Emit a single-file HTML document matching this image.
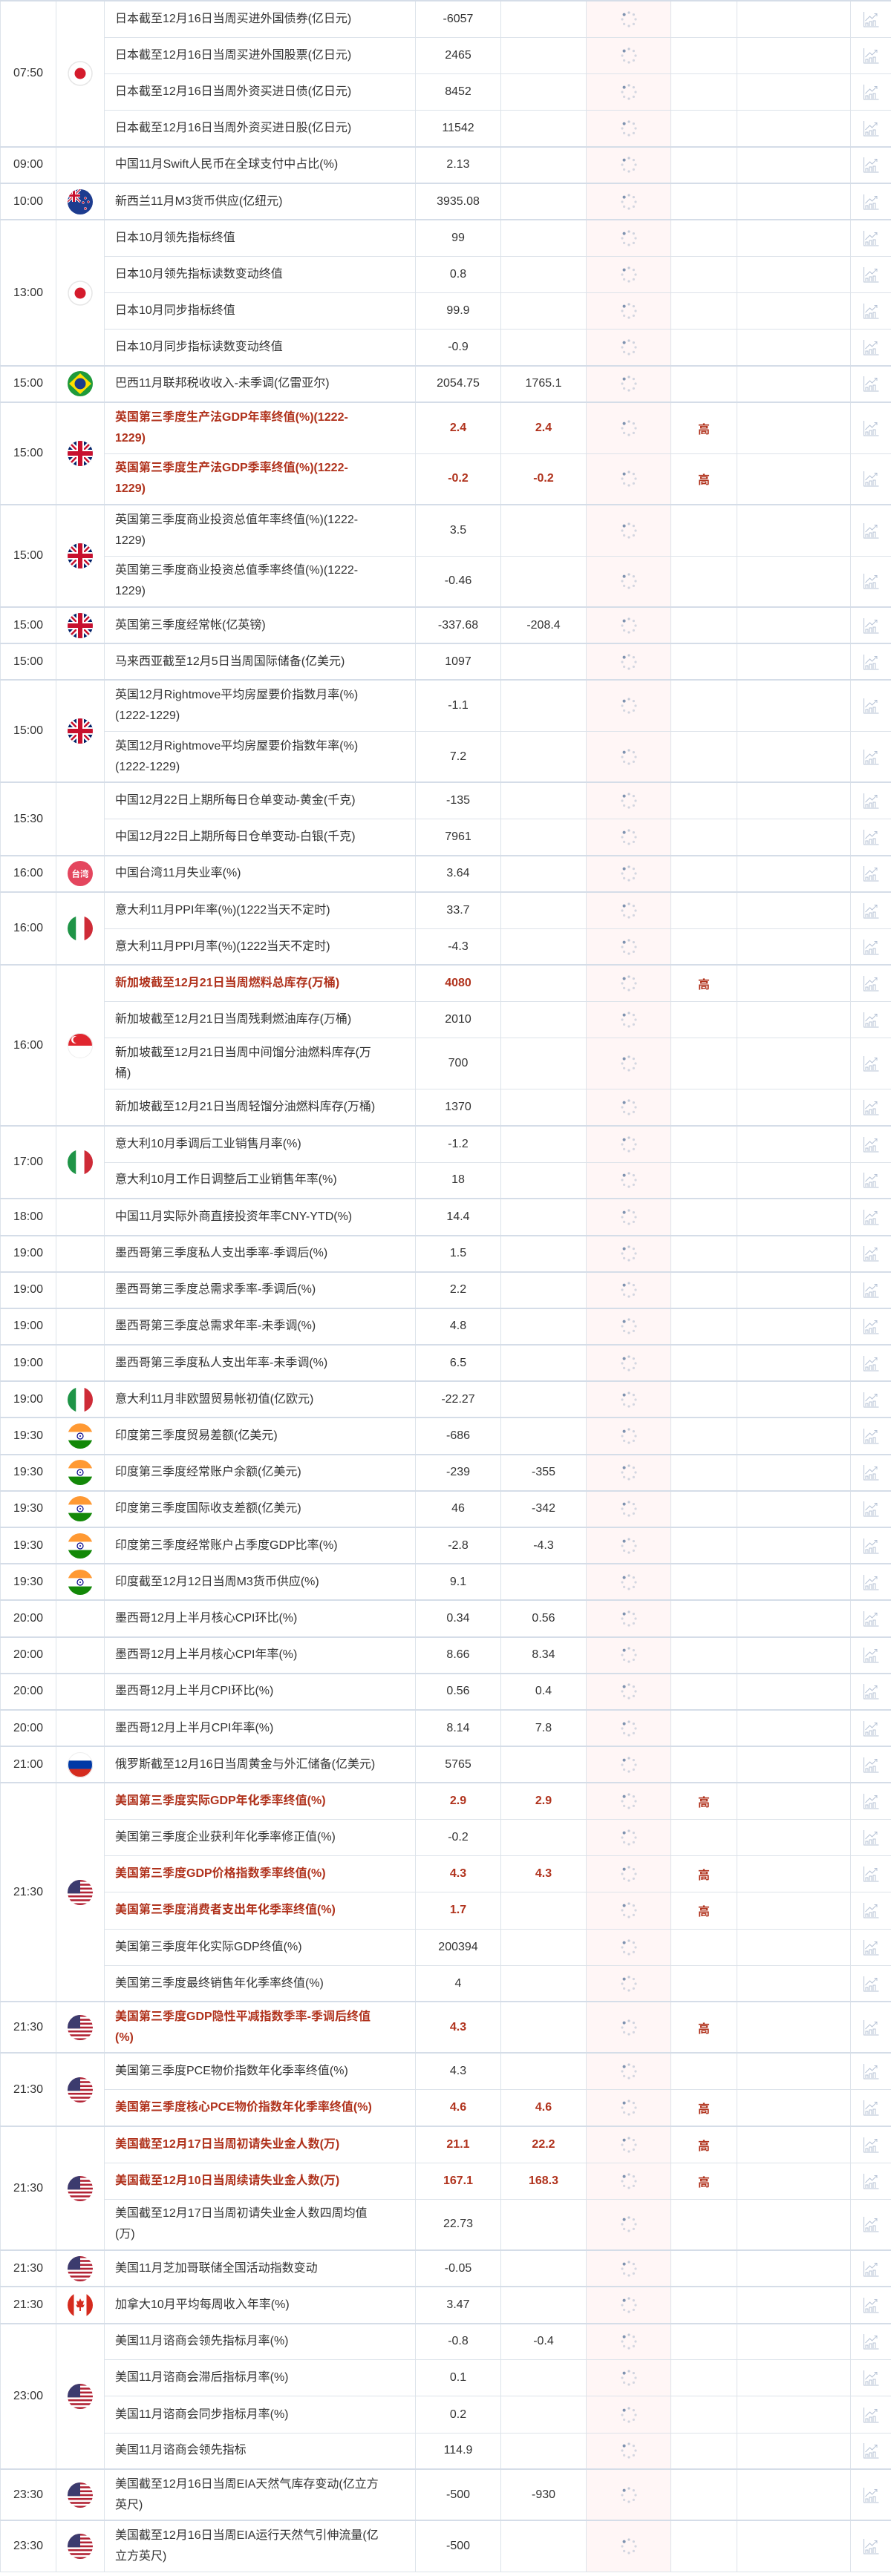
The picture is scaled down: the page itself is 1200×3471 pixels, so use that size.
<!DOCTYPE html>
<html><head><meta charset="utf-8">
<style>
html,body{margin:0;padding:0;background:#fff;}
body{width:1200px;height:3471px;overflow:hidden;font-family:"Liberation Sans","Noto Sans CJK SC",sans-serif;color:#333;font-size:16px;}
table{border-collapse:collapse;table-layout:fixed;width:1200px;border-top:2px solid #b9a896;}
td{border:1px solid #dde3ea;padding:0;text-align:center;vertical-align:middle;white-space:nowrap;overflow:hidden;}
tr.s{height:49.2px}
tr.d{height:69px}
tr.g>td{border-top:2px solid #d5dde8}
td.n{text-align:left;padding-left:14px;line-height:28px;}
td.p{background:#fff6f6}
td.f svg{display:block;margin:0 auto;width:34px;height:34px}
td.p svg{display:block;margin:0 auto;width:24px;height:24px}
td.c svg{display:block;margin:0 auto;width:24px;height:24px}
tr.r td.n,tr.r td.v,tr.r td.h{color:#b0321c;font-weight:bold}
td.h{color:#b0321c;font-weight:bold}
</style></head><body>
<svg width="0" height="0" style="position:absolute">
<defs>
<clipPath id="cc"><circle cx="17" cy="17" r="17"/></clipPath>
<symbol id="spin" viewBox="0 0 24 24">
<circle cx="12" cy="3" r="1.6" fill="#a9b8cc" opacity=".7"/>
<circle cx="18.4" cy="5.6" r="1.6" fill="#a9b8cc" opacity=".55"/>
<circle cx="21" cy="12" r="1.6" fill="#a9b8cc" opacity=".5"/>
<circle cx="18.4" cy="18.4" r="1.6" fill="#a9b8cc" opacity=".5"/>
<circle cx="12" cy="21" r="1.6" fill="#a9b8cc" opacity=".55"/>
<circle cx="5.6" cy="18.4" r="1.6" fill="#a9b8cc" opacity=".5"/>
<circle cx="3" cy="12" r="1.6" fill="#a9b8cc" opacity=".5"/>
<circle cx="5.6" cy="5.6" r="2" fill="#7f93b0"/>
</symbol>
<symbol id="ch" viewBox="0 0 24 24" fill="none" stroke="#b7c3d6" stroke-width="1">
<path d="M2.5 2v20h20"/>
<path d="M5 21v-4h3v4M10 21v-6h3v6M15 21v-7h3v7"/>
<path d="M4.5 14l6-6 3 3 6-6"/>
<path d="M16.5 4.5h3.5v3.5"/>
</symbol>
<symbol id="jp" viewBox="0 0 34 34"><circle cx="17" cy="17" r="16" fill="#fff" stroke="#e6e6e6" stroke-width="1.5"/><circle cx="17" cy="17" r="7.5" fill="#d41b2c"/></symbol>
<symbol id="uk" viewBox="0 0 34 34"><g clip-path="url(#cc)"><rect width="34" height="34" fill="#012169"/><path d="M0 0L34 34M34 0L0 34" stroke="#fff" stroke-width="7"/><path d="M0 0L34 34M34 0L0 34" stroke="#c8102e" stroke-width="2.5"/><path d="M17 0v34M0 17h34" stroke="#fff" stroke-width="10"/><path d="M17 0v34M0 17h34" stroke="#c8102e" stroke-width="6"/></g></symbol>
<symbol id="nz" viewBox="0 0 34 34"><g clip-path="url(#cc)"><rect width="34" height="34" fill="#1d3c8f"/><g transform="scale(.5)"><path d="M0 0L34 34M34 0L0 34" stroke="#fff" stroke-width="7"/><path d="M0 0L34 34M34 0L0 34" stroke="#c8102e" stroke-width="2.5"/><path d="M17 0v34M0 17h34" stroke="#fff" stroke-width="10"/><path d="M17 0v34M0 17h34" stroke="#c8102e" stroke-width="6"/></g><circle cx="24" cy="12" r="1.5" fill="#d0213a" stroke="#fff" stroke-width=".5"/><circle cx="28" cy="17" r="1.5" fill="#d0213a" stroke="#fff" stroke-width=".5"/><circle cx="21" cy="18" r="1.5" fill="#d0213a" stroke="#fff" stroke-width=".5"/><circle cx="24" cy="26" r="1.7" fill="#d0213a" stroke="#fff" stroke-width=".5"/></g></symbol>
<symbol id="br" viewBox="0 0 34 34"><g clip-path="url(#cc)"><rect width="34" height="34" fill="#1f9a3a"/><polygon points="17,3 32,17 17,31 2,17" fill="#fedf00"/><circle cx="17" cy="17" r="7.5" fill="#1b3c8c"/></g></symbol>
<symbol id="tw" viewBox="0 0 34 34"><circle cx="17" cy="17" r="17" fill="#e4465e"/><text x="17" y="21.5" font-size="11.5" font-weight="bold" fill="#fff" text-anchor="middle" font-family="Noto Sans CJK SC,sans-serif">台湾</text></symbol>
<symbol id="it" viewBox="0 0 34 34"><g clip-path="url(#cc)"><rect width="11.4" height="34" fill="#1f9447"/><rect x="11.3" width="11.4" height="34" fill="#fff"/><rect x="22.6" width="11.4" height="34" fill="#ce2b37"/></g></symbol>
<symbol id="sg" viewBox="0 0 34 34"><g clip-path="url(#cc)"><rect width="34" height="34" fill="#fff"/><rect width="34" height="17" fill="#e0262f"/><circle cx="10" cy="9" r="5" fill="#fff"/><circle cx="12" cy="9" r="4.5" fill="#e0262f"/></g><circle cx="17" cy="17" r="16.5" fill="none" stroke="#eee"/></symbol>
<symbol id="in" viewBox="0 0 34 34"><g clip-path="url(#cc)"><rect width="34" height="34" fill="#fff"/><rect width="34" height="11.4" fill="#ff9933"/><rect y="22.6" width="34" height="11.4" fill="#138808"/><circle cx="17" cy="17" r="4" fill="none" stroke="#000088" stroke-width="1.2"/><circle cx="17" cy="17" r="1" fill="#000088"/></g></symbol>
<symbol id="ru" viewBox="0 0 34 34"><g clip-path="url(#cc)"><rect width="34" height="34" fill="#fff"/><rect y="11.3" width="34" height="11.4" fill="#0039a6"/><rect y="22.6" width="34" height="11.4" fill="#d52b1e"/></g><circle cx="17" cy="17" r="16.5" fill="none" stroke="#eee"/></symbol>
<symbol id="ca" viewBox="0 0 34 34"><g clip-path="url(#cc)"><rect width="34" height="34" fill="#fff"/><rect width="8.5" height="34" fill="#d52b1e"/><rect x="25.5" width="8.5" height="34" fill="#d52b1e"/><polygon points="17,8 19,12 22,11 20.5,17 23,16 21,20 18,20 18,25 16,25 16,20 13,20 11,16 13.5,17 12,11 15,12" fill="#d52b1e"/></g></symbol>
<symbol id="us" viewBox="0 0 34 34"><g clip-path="url(#cc)"><rect width="34" height="34" fill="#fff"/><rect y="0" width="34" height="2.6" fill="#b22234"/><rect y="5.2" width="34" height="2.6" fill="#b22234"/><rect y="10.5" width="34" height="2.6" fill="#b22234"/><rect y="15.7" width="34" height="2.6" fill="#b22234"/><rect y="20.9" width="34" height="2.6" fill="#b22234"/><rect y="26.2" width="34" height="2.6" fill="#b22234"/><rect y="31.4" width="34" height="2.6" fill="#b22234"/><rect width="17" height="18.3" fill="#3c3b6e"/></g></symbol>
</defs></svg>
<table>
<colgroup><col style="width:75px"><col style="width:65px"><col style="width:419px"><col style="width:115px"><col style="width:115px"><col style="width:114px"><col style="width:89px"><col style="width:153px"><col style="width:55px"></colgroup>
<tbody>
<tr class="s g"><td rowspan="4">07:50</td><td class="f" rowspan="4"><svg><use href="#jp"/></svg></td><td class="n">日本截至12月16日当周买进外国债券(亿日元)</td><td class="v">-6057</td><td class="v"></td><td class="p"><svg><use href="#spin"/></svg></td><td class="h"></td><td></td><td class="c"><svg><use href="#ch"/></svg></td></tr>
<tr class="s"><td class="n">日本截至12月16日当周买进外国股票(亿日元)</td><td class="v">2465</td><td class="v"></td><td class="p"><svg><use href="#spin"/></svg></td><td class="h"></td><td></td><td class="c"><svg><use href="#ch"/></svg></td></tr>
<tr class="s"><td class="n">日本截至12月16日当周外资买进日债(亿日元)</td><td class="v">8452</td><td class="v"></td><td class="p"><svg><use href="#spin"/></svg></td><td class="h"></td><td></td><td class="c"><svg><use href="#ch"/></svg></td></tr>
<tr class="s"><td class="n">日本截至12月16日当周外资买进日股(亿日元)</td><td class="v">11542</td><td class="v"></td><td class="p"><svg><use href="#spin"/></svg></td><td class="h"></td><td></td><td class="c"><svg><use href="#ch"/></svg></td></tr>
<tr class="s g"><td>09:00</td><td class="f"></td><td class="n">中国11月Swift人民币在全球支付中占比(%)</td><td class="v">2.13</td><td class="v"></td><td class="p"><svg><use href="#spin"/></svg></td><td class="h"></td><td></td><td class="c"><svg><use href="#ch"/></svg></td></tr>
<tr class="s g"><td>10:00</td><td class="f"><svg><use href="#nz"/></svg></td><td class="n">新西兰11月M3货币供应(亿纽元)</td><td class="v">3935.08</td><td class="v"></td><td class="p"><svg><use href="#spin"/></svg></td><td class="h"></td><td></td><td class="c"><svg><use href="#ch"/></svg></td></tr>
<tr class="s g"><td rowspan="4">13:00</td><td class="f" rowspan="4"><svg><use href="#jp"/></svg></td><td class="n">日本10月领先指标终值</td><td class="v">99</td><td class="v"></td><td class="p"><svg><use href="#spin"/></svg></td><td class="h"></td><td></td><td class="c"><svg><use href="#ch"/></svg></td></tr>
<tr class="s"><td class="n">日本10月领先指标读数变动终值</td><td class="v">0.8</td><td class="v"></td><td class="p"><svg><use href="#spin"/></svg></td><td class="h"></td><td></td><td class="c"><svg><use href="#ch"/></svg></td></tr>
<tr class="s"><td class="n">日本10月同步指标终值</td><td class="v">99.9</td><td class="v"></td><td class="p"><svg><use href="#spin"/></svg></td><td class="h"></td><td></td><td class="c"><svg><use href="#ch"/></svg></td></tr>
<tr class="s"><td class="n">日本10月同步指标读数变动终值</td><td class="v">-0.9</td><td class="v"></td><td class="p"><svg><use href="#spin"/></svg></td><td class="h"></td><td></td><td class="c"><svg><use href="#ch"/></svg></td></tr>
<tr class="s g"><td>15:00</td><td class="f"><svg><use href="#br"/></svg></td><td class="n">巴西11月联邦税收收入-未季调(亿雷亚尔)</td><td class="v">2054.75</td><td class="v">1765.1</td><td class="p"><svg><use href="#spin"/></svg></td><td class="h"></td><td></td><td class="c"><svg><use href="#ch"/></svg></td></tr>
<tr class="d g r"><td rowspan="2">15:00</td><td class="f" rowspan="2"><svg><use href="#uk"/></svg></td><td class="n">英国第三季度生产法GDP年率终值(%)(1222-<br>1229)</td><td class="v">2.4</td><td class="v">2.4</td><td class="p"><svg><use href="#spin"/></svg></td><td class="h">高</td><td></td><td class="c"><svg><use href="#ch"/></svg></td></tr>
<tr class="d r"><td class="n">英国第三季度生产法GDP季率终值(%)(1222-<br>1229)</td><td class="v">-0.2</td><td class="v">-0.2</td><td class="p"><svg><use href="#spin"/></svg></td><td class="h">高</td><td></td><td class="c"><svg><use href="#ch"/></svg></td></tr>
<tr class="d g"><td rowspan="2">15:00</td><td class="f" rowspan="2"><svg><use href="#uk"/></svg></td><td class="n">英国第三季度商业投资总值年率终值(%)(1222-<br>1229)</td><td class="v">3.5</td><td class="v"></td><td class="p"><svg><use href="#spin"/></svg></td><td class="h"></td><td></td><td class="c"><svg><use href="#ch"/></svg></td></tr>
<tr class="d"><td class="n">英国第三季度商业投资总值季率终值(%)(1222-<br>1229)</td><td class="v">-0.46</td><td class="v"></td><td class="p"><svg><use href="#spin"/></svg></td><td class="h"></td><td></td><td class="c"><svg><use href="#ch"/></svg></td></tr>
<tr class="s g"><td>15:00</td><td class="f"><svg><use href="#uk"/></svg></td><td class="n">英国第三季度经常帐(亿英镑)</td><td class="v">-337.68</td><td class="v">-208.4</td><td class="p"><svg><use href="#spin"/></svg></td><td class="h"></td><td></td><td class="c"><svg><use href="#ch"/></svg></td></tr>
<tr class="s g"><td>15:00</td><td class="f"></td><td class="n">马来西亚截至12月5日当周国际储备(亿美元)</td><td class="v">1097</td><td class="v"></td><td class="p"><svg><use href="#spin"/></svg></td><td class="h"></td><td></td><td class="c"><svg><use href="#ch"/></svg></td></tr>
<tr class="d g"><td rowspan="2">15:00</td><td class="f" rowspan="2"><svg><use href="#uk"/></svg></td><td class="n">英国12月Rightmove平均房屋要价指数月率(%)<br>(1222-1229)</td><td class="v">-1.1</td><td class="v"></td><td class="p"><svg><use href="#spin"/></svg></td><td class="h"></td><td></td><td class="c"><svg><use href="#ch"/></svg></td></tr>
<tr class="d"><td class="n">英国12月Rightmove平均房屋要价指数年率(%)<br>(1222-1229)</td><td class="v">7.2</td><td class="v"></td><td class="p"><svg><use href="#spin"/></svg></td><td class="h"></td><td></td><td class="c"><svg><use href="#ch"/></svg></td></tr>
<tr class="s g"><td rowspan="2">15:30</td><td class="f" rowspan="2"></td><td class="n">中国12月22日上期所每日仓单变动-黄金(千克)</td><td class="v">-135</td><td class="v"></td><td class="p"><svg><use href="#spin"/></svg></td><td class="h"></td><td></td><td class="c"><svg><use href="#ch"/></svg></td></tr>
<tr class="s"><td class="n">中国12月22日上期所每日仓单变动-白银(千克)</td><td class="v">7961</td><td class="v"></td><td class="p"><svg><use href="#spin"/></svg></td><td class="h"></td><td></td><td class="c"><svg><use href="#ch"/></svg></td></tr>
<tr class="s g"><td>16:00</td><td class="f"><svg><use href="#tw"/></svg></td><td class="n">中国台湾11月失业率(%)</td><td class="v">3.64</td><td class="v"></td><td class="p"><svg><use href="#spin"/></svg></td><td class="h"></td><td></td><td class="c"><svg><use href="#ch"/></svg></td></tr>
<tr class="s g"><td rowspan="2">16:00</td><td class="f" rowspan="2"><svg><use href="#it"/></svg></td><td class="n">意大利11月PPI年率(%)(1222当天不定时)</td><td class="v">33.7</td><td class="v"></td><td class="p"><svg><use href="#spin"/></svg></td><td class="h"></td><td></td><td class="c"><svg><use href="#ch"/></svg></td></tr>
<tr class="s"><td class="n">意大利11月PPI月率(%)(1222当天不定时)</td><td class="v">-4.3</td><td class="v"></td><td class="p"><svg><use href="#spin"/></svg></td><td class="h"></td><td></td><td class="c"><svg><use href="#ch"/></svg></td></tr>
<tr class="s g r"><td rowspan="4">16:00</td><td class="f" rowspan="4"><svg><use href="#sg"/></svg></td><td class="n">新加坡截至12月21日当周燃料总库存(万桶)</td><td class="v">4080</td><td class="v"></td><td class="p"><svg><use href="#spin"/></svg></td><td class="h">高</td><td></td><td class="c"><svg><use href="#ch"/></svg></td></tr>
<tr class="s"><td class="n">新加坡截至12月21日当周残剩燃油库存(万桶)</td><td class="v">2010</td><td class="v"></td><td class="p"><svg><use href="#spin"/></svg></td><td class="h"></td><td></td><td class="c"><svg><use href="#ch"/></svg></td></tr>
<tr class="d"><td class="n">新加坡截至12月21日当周中间馏分油燃料库存(万<br>桶)</td><td class="v">700</td><td class="v"></td><td class="p"><svg><use href="#spin"/></svg></td><td class="h"></td><td></td><td class="c"><svg><use href="#ch"/></svg></td></tr>
<tr class="s"><td class="n">新加坡截至12月21日当周轻馏分油燃料库存(万桶)</td><td class="v">1370</td><td class="v"></td><td class="p"><svg><use href="#spin"/></svg></td><td class="h"></td><td></td><td class="c"><svg><use href="#ch"/></svg></td></tr>
<tr class="s g"><td rowspan="2">17:00</td><td class="f" rowspan="2"><svg><use href="#it"/></svg></td><td class="n">意大利10月季调后工业销售月率(%)</td><td class="v">-1.2</td><td class="v"></td><td class="p"><svg><use href="#spin"/></svg></td><td class="h"></td><td></td><td class="c"><svg><use href="#ch"/></svg></td></tr>
<tr class="s"><td class="n">意大利10月工作日调整后工业销售年率(%)</td><td class="v">18</td><td class="v"></td><td class="p"><svg><use href="#spin"/></svg></td><td class="h"></td><td></td><td class="c"><svg><use href="#ch"/></svg></td></tr>
<tr class="s g"><td>18:00</td><td class="f"></td><td class="n">中国11月实际外商直接投资年率CNY-YTD(%)</td><td class="v">14.4</td><td class="v"></td><td class="p"><svg><use href="#spin"/></svg></td><td class="h"></td><td></td><td class="c"><svg><use href="#ch"/></svg></td></tr>
<tr class="s g"><td>19:00</td><td class="f"></td><td class="n">墨西哥第三季度私人支出季率-季调后(%)</td><td class="v">1.5</td><td class="v"></td><td class="p"><svg><use href="#spin"/></svg></td><td class="h"></td><td></td><td class="c"><svg><use href="#ch"/></svg></td></tr>
<tr class="s g"><td>19:00</td><td class="f"></td><td class="n">墨西哥第三季度总需求季率-季调后(%)</td><td class="v">2.2</td><td class="v"></td><td class="p"><svg><use href="#spin"/></svg></td><td class="h"></td><td></td><td class="c"><svg><use href="#ch"/></svg></td></tr>
<tr class="s g"><td>19:00</td><td class="f"></td><td class="n">墨西哥第三季度总需求年率-未季调(%)</td><td class="v">4.8</td><td class="v"></td><td class="p"><svg><use href="#spin"/></svg></td><td class="h"></td><td></td><td class="c"><svg><use href="#ch"/></svg></td></tr>
<tr class="s g"><td>19:00</td><td class="f"></td><td class="n">墨西哥第三季度私人支出年率-未季调(%)</td><td class="v">6.5</td><td class="v"></td><td class="p"><svg><use href="#spin"/></svg></td><td class="h"></td><td></td><td class="c"><svg><use href="#ch"/></svg></td></tr>
<tr class="s g"><td>19:00</td><td class="f"><svg><use href="#it"/></svg></td><td class="n">意大利11月非欧盟贸易帐初值(亿欧元)</td><td class="v">-22.27</td><td class="v"></td><td class="p"><svg><use href="#spin"/></svg></td><td class="h"></td><td></td><td class="c"><svg><use href="#ch"/></svg></td></tr>
<tr class="s g"><td>19:30</td><td class="f"><svg><use href="#in"/></svg></td><td class="n">印度第三季度贸易差额(亿美元)</td><td class="v">-686</td><td class="v"></td><td class="p"><svg><use href="#spin"/></svg></td><td class="h"></td><td></td><td class="c"><svg><use href="#ch"/></svg></td></tr>
<tr class="s g"><td>19:30</td><td class="f"><svg><use href="#in"/></svg></td><td class="n">印度第三季度经常账户余额(亿美元)</td><td class="v">-239</td><td class="v">-355</td><td class="p"><svg><use href="#spin"/></svg></td><td class="h"></td><td></td><td class="c"><svg><use href="#ch"/></svg></td></tr>
<tr class="s g"><td>19:30</td><td class="f"><svg><use href="#in"/></svg></td><td class="n">印度第三季度国际收支差额(亿美元)</td><td class="v">46</td><td class="v">-342</td><td class="p"><svg><use href="#spin"/></svg></td><td class="h"></td><td></td><td class="c"><svg><use href="#ch"/></svg></td></tr>
<tr class="s g"><td>19:30</td><td class="f"><svg><use href="#in"/></svg></td><td class="n">印度第三季度经常账户占季度GDP比率(%)</td><td class="v">-2.8</td><td class="v">-4.3</td><td class="p"><svg><use href="#spin"/></svg></td><td class="h"></td><td></td><td class="c"><svg><use href="#ch"/></svg></td></tr>
<tr class="s g"><td>19:30</td><td class="f"><svg><use href="#in"/></svg></td><td class="n">印度截至12月12日当周M3货币供应(%)</td><td class="v">9.1</td><td class="v"></td><td class="p"><svg><use href="#spin"/></svg></td><td class="h"></td><td></td><td class="c"><svg><use href="#ch"/></svg></td></tr>
<tr class="s g"><td>20:00</td><td class="f"></td><td class="n">墨西哥12月上半月核心CPI环比(%)</td><td class="v">0.34</td><td class="v">0.56</td><td class="p"><svg><use href="#spin"/></svg></td><td class="h"></td><td></td><td class="c"><svg><use href="#ch"/></svg></td></tr>
<tr class="s g"><td>20:00</td><td class="f"></td><td class="n">墨西哥12月上半月核心CPI年率(%)</td><td class="v">8.66</td><td class="v">8.34</td><td class="p"><svg><use href="#spin"/></svg></td><td class="h"></td><td></td><td class="c"><svg><use href="#ch"/></svg></td></tr>
<tr class="s g"><td>20:00</td><td class="f"></td><td class="n">墨西哥12月上半月CPI环比(%)</td><td class="v">0.56</td><td class="v">0.4</td><td class="p"><svg><use href="#spin"/></svg></td><td class="h"></td><td></td><td class="c"><svg><use href="#ch"/></svg></td></tr>
<tr class="s g"><td>20:00</td><td class="f"></td><td class="n">墨西哥12月上半月CPI年率(%)</td><td class="v">8.14</td><td class="v">7.8</td><td class="p"><svg><use href="#spin"/></svg></td><td class="h"></td><td></td><td class="c"><svg><use href="#ch"/></svg></td></tr>
<tr class="s g"><td>21:00</td><td class="f"><svg><use href="#ru"/></svg></td><td class="n">俄罗斯截至12月16日当周黄金与外汇储备(亿美元)</td><td class="v">5765</td><td class="v"></td><td class="p"><svg><use href="#spin"/></svg></td><td class="h"></td><td></td><td class="c"><svg><use href="#ch"/></svg></td></tr>
<tr class="s g r"><td rowspan="6">21:30</td><td class="f" rowspan="6"><svg><use href="#us"/></svg></td><td class="n">美国第三季度实际GDP年化季率终值(%)</td><td class="v">2.9</td><td class="v">2.9</td><td class="p"><svg><use href="#spin"/></svg></td><td class="h">高</td><td></td><td class="c"><svg><use href="#ch"/></svg></td></tr>
<tr class="s"><td class="n">美国第三季度企业获利年化季率修正值(%)</td><td class="v">-0.2</td><td class="v"></td><td class="p"><svg><use href="#spin"/></svg></td><td class="h"></td><td></td><td class="c"><svg><use href="#ch"/></svg></td></tr>
<tr class="s r"><td class="n">美国第三季度GDP价格指数季率终值(%)</td><td class="v">4.3</td><td class="v">4.3</td><td class="p"><svg><use href="#spin"/></svg></td><td class="h">高</td><td></td><td class="c"><svg><use href="#ch"/></svg></td></tr>
<tr class="s r"><td class="n">美国第三季度消费者支出年化季率终值(%)</td><td class="v">1.7</td><td class="v"></td><td class="p"><svg><use href="#spin"/></svg></td><td class="h">高</td><td></td><td class="c"><svg><use href="#ch"/></svg></td></tr>
<tr class="s"><td class="n">美国第三季度年化实际GDP终值(%)</td><td class="v">200394</td><td class="v"></td><td class="p"><svg><use href="#spin"/></svg></td><td class="h"></td><td></td><td class="c"><svg><use href="#ch"/></svg></td></tr>
<tr class="s"><td class="n">美国第三季度最终销售年化季率终值(%)</td><td class="v">4</td><td class="v"></td><td class="p"><svg><use href="#spin"/></svg></td><td class="h"></td><td></td><td class="c"><svg><use href="#ch"/></svg></td></tr>
<tr class="d g r"><td>21:30</td><td class="f"><svg><use href="#us"/></svg></td><td class="n">美国第三季度GDP隐性平减指数季率-季调后终值<br>(%)</td><td class="v">4.3</td><td class="v"></td><td class="p"><svg><use href="#spin"/></svg></td><td class="h">高</td><td></td><td class="c"><svg><use href="#ch"/></svg></td></tr>
<tr class="s g"><td rowspan="2">21:30</td><td class="f" rowspan="2"><svg><use href="#us"/></svg></td><td class="n">美国第三季度PCE物价指数年化季率终值(%)</td><td class="v">4.3</td><td class="v"></td><td class="p"><svg><use href="#spin"/></svg></td><td class="h"></td><td></td><td class="c"><svg><use href="#ch"/></svg></td></tr>
<tr class="s r"><td class="n">美国第三季度核心PCE物价指数年化季率终值(%)</td><td class="v">4.6</td><td class="v">4.6</td><td class="p"><svg><use href="#spin"/></svg></td><td class="h">高</td><td></td><td class="c"><svg><use href="#ch"/></svg></td></tr>
<tr class="s g r"><td rowspan="3">21:30</td><td class="f" rowspan="3"><svg><use href="#us"/></svg></td><td class="n">美国截至12月17日当周初请失业金人数(万)</td><td class="v">21.1</td><td class="v">22.2</td><td class="p"><svg><use href="#spin"/></svg></td><td class="h">高</td><td></td><td class="c"><svg><use href="#ch"/></svg></td></tr>
<tr class="s r"><td class="n">美国截至12月10日当周续请失业金人数(万)</td><td class="v">167.1</td><td class="v">168.3</td><td class="p"><svg><use href="#spin"/></svg></td><td class="h">高</td><td></td><td class="c"><svg><use href="#ch"/></svg></td></tr>
<tr class="d"><td class="n">美国截至12月17日当周初请失业金人数四周均值<br>(万)</td><td class="v">22.73</td><td class="v"></td><td class="p"><svg><use href="#spin"/></svg></td><td class="h"></td><td></td><td class="c"><svg><use href="#ch"/></svg></td></tr>
<tr class="s g"><td>21:30</td><td class="f"><svg><use href="#us"/></svg></td><td class="n">美国11月芝加哥联储全国活动指数变动</td><td class="v">-0.05</td><td class="v"></td><td class="p"><svg><use href="#spin"/></svg></td><td class="h"></td><td></td><td class="c"><svg><use href="#ch"/></svg></td></tr>
<tr class="s g"><td>21:30</td><td class="f"><svg><use href="#ca"/></svg></td><td class="n">加拿大10月平均每周收入年率(%)</td><td class="v">3.47</td><td class="v"></td><td class="p"><svg><use href="#spin"/></svg></td><td class="h"></td><td></td><td class="c"><svg><use href="#ch"/></svg></td></tr>
<tr class="s g"><td rowspan="4">23:00</td><td class="f" rowspan="4"><svg><use href="#us"/></svg></td><td class="n">美国11月谘商会领先指标月率(%)</td><td class="v">-0.8</td><td class="v">-0.4</td><td class="p"><svg><use href="#spin"/></svg></td><td class="h"></td><td></td><td class="c"><svg><use href="#ch"/></svg></td></tr>
<tr class="s"><td class="n">美国11月谘商会滞后指标月率(%)</td><td class="v">0.1</td><td class="v"></td><td class="p"><svg><use href="#spin"/></svg></td><td class="h"></td><td></td><td class="c"><svg><use href="#ch"/></svg></td></tr>
<tr class="s"><td class="n">美国11月谘商会同步指标月率(%)</td><td class="v">0.2</td><td class="v"></td><td class="p"><svg><use href="#spin"/></svg></td><td class="h"></td><td></td><td class="c"><svg><use href="#ch"/></svg></td></tr>
<tr class="s"><td class="n">美国11月谘商会领先指标</td><td class="v">114.9</td><td class="v"></td><td class="p"><svg><use href="#spin"/></svg></td><td class="h"></td><td></td><td class="c"><svg><use href="#ch"/></svg></td></tr>
<tr class="d g"><td>23:30</td><td class="f"><svg><use href="#us"/></svg></td><td class="n">美国截至12月16日当周EIA天然气库存变动(亿立方<br>英尺)</td><td class="v">-500</td><td class="v">-930</td><td class="p"><svg><use href="#spin"/></svg></td><td class="h"></td><td></td><td class="c"><svg><use href="#ch"/></svg></td></tr>
<tr class="d g"><td>23:30</td><td class="f"><svg><use href="#us"/></svg></td><td class="n">美国截至12月16日当周EIA运行天然气引伸流量(亿<br>立方英尺)</td><td class="v">-500</td><td class="v"></td><td class="p"><svg><use href="#spin"/></svg></td><td class="h"></td><td></td><td class="c"><svg><use href="#ch"/></svg></td></tr>
</tbody></table>
</body></html>
